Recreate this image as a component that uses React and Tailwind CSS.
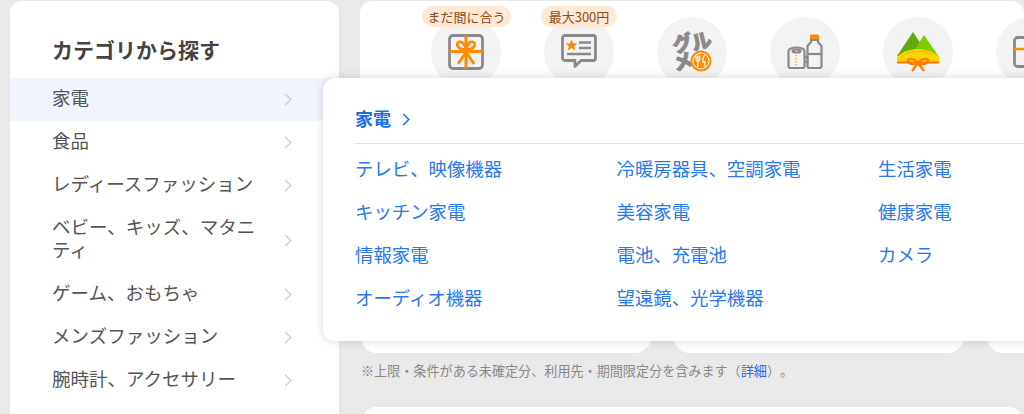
const FONT = "font-['Noto_Sans_CJK_JP','Noto_Sans',sans-serif]";

const cats = ["家電", "食品", "レディースファッション", "ベビー、キッズ、マタニティ", "ゲーム、おもちゃ", "メンズファッション", "腕時計、アクセサリー"];
const subs = ["テレビ、映像機器", "冷暖房器具、空調家電", "生活家電", "キッチン家電", "美容家電", "健康家電", "情報家電", "電池、充電池", "カメラ", "オーディオ機器", "望遠鏡、光学機器"];

function Chevron({ className, w = 2 }) {
  return (
    <svg viewBox="0 0 8 14" className={className} fill="none" stroke="currentColor" strokeWidth={w}>
      <path d="M1 1l6 6-6 6" />
    </svg>
  );
}

function Gift() {
  return (
    <svg viewBox="0 0 36 36" className="w-[36px] h-[36px]" fill="none">
      <rect x="1.500" y="1.500" width="33" height="33" rx="3.500" stroke="#8a8a8a" strokeWidth="2.800" />
      <path d="M18 1.500v33M1.500 17.500h33" stroke="#ff8c00" strokeWidth="3" />
      <path d="M18 16c-1-6-4-9-7-8s-3 7 7 8c10-1 10-7 7-8s-6 2-7 8zM18 18l-8 12M18 18l8 12" stroke="#ff8c00" strokeWidth="2.800" />
    </svg>
  );
}

function Review() {
  return (
    <svg viewBox="0 0 36 36" className="w-[36px] h-[36px]" fill="none">
      <path d="M4 1.500h28a2.500 2.500 0 0 1 2.500 2.500v20a2.500 2.500 0 0 1-2.500 2.500H20l-6 6v-6H4A2.500 2.500 0 0 1 1.500 24V4A2.500 2.500 0 0 1 4 1.500z" stroke="#8a8a8a" strokeWidth="2.800" strokeLinejoin="round" />
      <path d="M10.500 5.500l1.800 4h4.200l-3.300 2.700 1.200 4.300-3.900-2.400-3.900 2.400 1.200-4.300-3.300-2.700h4.200z" fill="#ff8c00" />
      <path d="M18 8.500h12M18 14h12M6 20h24" stroke="#8a8a8a" strokeWidth="2.400" />
    </svg>
  );
}

function Gourmet() {
  return (
    <svg viewBox="0 0 40 40" className="w-[40px] h-[40px] overflow-visible">
      <g fontFamily="'Noto Sans CJK JP',sans-serif" fontWeight="900" fontSize="20" fill="#8a8a8a" stroke="#8a8a8a" strokeWidth="0.800">
        <text x="1" y="19" transform="rotate(-14 10 14)">グ</text>
        <text x="20" y="17" transform="rotate(-14 28 12)">ル</text>
        <text x="1" y="37" transform="rotate(-14 10 30)">メ</text>
      </g>
      <circle cx="29" cy="29" r="10.500" fill="#ff8c00" />
      <circle cx="29" cy="29" r="8" fill="none" stroke="#fff" strokeWidth="1" />
      <path d="M24 23.500v4c0 1.500 1.800 2 1.800 3V35M25.800 23.500v4.500M27.600 23.500v4c0 1.500-1.800 2-1.800 3M33 23c-1.500 1-2.200 4-2.200 7H33v5" stroke="#fff" strokeWidth="1.300" fill="none" />
    </svg>
  );
}

function Goods() {
  return (
    <svg viewBox="0 0 36 36" className="w-[36px] h-[36px]" fill="none" stroke="#8a8a8a" strokeWidth="2.200">
      <rect x="23" y="0.500" width="9" height="5" rx="1.200" fill="#ff8c00" stroke="none" />
      <path d="M24 6h7v2l3.500 4v20a2 2 0 0 1-2 2H22.500a2 2 0 0 1-2-2V12l3.500-4z" />
      <path d="M20.500 20h14" />
      <path d="M1.500 17c0-2 3.500-3.500 8-3.500s8 1.500 8 3.500v15a2 2 0 0 1-2 2h-12a2 2 0 0 1-2-2z" />
      <ellipse cx="9.500" cy="17" rx="4" ry="1.500" />
      <path d="M17.500 23h3v5h-3" />
      <path d="M9 21v13" stroke="#ff8c00" strokeWidth="1" strokeDasharray="1.500 1.500" />
    </svg>
  );
}

function Mountain() {
  return (
    <svg viewBox="0 0 44 40" className="w-[44px] h-[40px]" fill="none">
      <path d="M17 0l16 24H1z" fill="#66a80f" />
      <path d="M28 3l15 22H14z" fill="#7fcc00" />
      <path d="M1 30v-5c6-6 14-8 21-8s15 2 21 8v5z" fill="#ffd400" />
      <path d="M5 25c6-5 12-6 18-6s10 1 15 4" stroke="#f5b800" strokeWidth="1" />
      <path d="M1 30.500h42" stroke="#ff7a00" strokeWidth="2" />
      <path d="M22 31c-3-5-10-5-10-2s6 4 10 2c4 2 10 1 10-2s-7-3-10 2zM22 31l-6 8M22 31l6 8" stroke="#ff7a00" strokeWidth="2.200" />
    </svg>
  );
}

function Partial() {
  return (
    <svg viewBox="0 0 36 32" className="w-[36px] h-[32px]" fill="none">
      <rect x="1.500" y="1.500" width="33" height="29" rx="3" stroke="#8a8a8a" strokeWidth="2.800" />
      <path d="M1 13h34" stroke="#ff8c00" strokeWidth="2.600" />
    </svg>
  );
}

const circles = [
  { icon: <Gift />, badge: "まだ間に合う", pos: "-left-[9px]", width: "w-[89px]" },
  { icon: <Review />, badge: "最大300円", pos: "-left-[3px]", width: "w-[76px]" },
  { icon: <Gourmet /> },
  { icon: <Goods /> },
  { icon: <Mountain /> },
  { icon: <Partial /> },
];

export default function App() {
  return (
    <div className={`relative flex h-[414px] w-[1024px] gap-[21px] overflow-hidden bg-[#e9e9e9] pl-[10px] pt-px ${FONT}`}>
      <aside className="w-[329px] shrink-0 rounded-t-[12px] bg-white">
        <h2 className="pl-[42px] pt-[34px] pb-[14px] text-[21px] font-bold leading-[29px] text-[#444]">カテゴリから探す</h2>
        <ul>
          {cats.map((c, i) => (
            <li key={c} className={`flex items-center py-[10px] pl-[42px] pr-[47px] text-[18.500px] leading-[23px] text-[#555] ${i === 0 ? "bg-[#f0f5fe]" : ""}`}>
              <span className="w-[205px] -translate-y-[2px] [overflow-wrap:anywhere]">{c}</span>
              <Chevron className="ml-auto h-[13px] w-[8px] text-[#cfcfcf]" w={1.500} />
            </li>
          ))}
        </ul>
      </aside>

      <main className="min-w-0 flex-1">
        <section className="flex h-[100px] gap-[43px] rounded-t-[12px] bg-white pl-[71px] pt-[16px]">
          {circles.map((c, i) => (
            <div key={i} className="relative flex h-[70px] w-[70px] shrink-0 items-center justify-center rounded-full bg-[#f3f3f3]">
              {c.icon}
              {c.badge && (
                <span className={`absolute -top-[11px] ${c.pos} ${c.width} flex h-[21px] items-center justify-center rounded-full bg-[#ffe9d4] text-[13px] text-[#8a4b1c]`}>{c.badge}</span>
              )}
            </div>
          ))}
        </section>
        <div className="flex gap-[23.500px] pl-px">
          {[0, 1, 2].map((i) => (
            <div key={i} className="h-[252px] w-[289.500px] shrink-0 rounded-b-[16px] bg-white" />
          ))}
        </div>
        <p className="pl-px pt-[8px] text-[13.100px] leading-[19px] text-[#888] [text-spacing-trim:space-all]">
          ※上限・条件がある未確定分、利用先・期間限定分を含みます（<span className="text-[#1a6ee6]">詳細</span>）。
        </p>
        <div className="ml-px mt-[27px] h-[20px] rounded-t-[16px] bg-white" />
      </main>

      <div className="absolute left-[323px] top-[78px] h-[263px] w-[720px] rounded-[12px] bg-white pl-[32px] shadow-[0_0_10px_rgba(0,0,0,0.16)]">
        <div className="flex h-[66px] items-center gap-[11px] border-b border-[#dfdfdf] pt-[23px] pb-[9px] text-[#1a6ee6]">
          <span className="text-[18px] font-bold leading-[24px]">家電</span>
          <Chevron className="mt-[4px] h-[13px] w-[8px]" w={1.600} />
        </div>
        <div className="grid grid-cols-[261.500px_261.500px_1fr] pt-[2px]">
          {subs.map((s) => (
            <a key={s} className="flex h-[43px] items-center text-[18.400px] leading-[24px] text-[#2a78ea]">{s}</a>
          ))}
        </div>
      </div>
    </div>
  );
}
